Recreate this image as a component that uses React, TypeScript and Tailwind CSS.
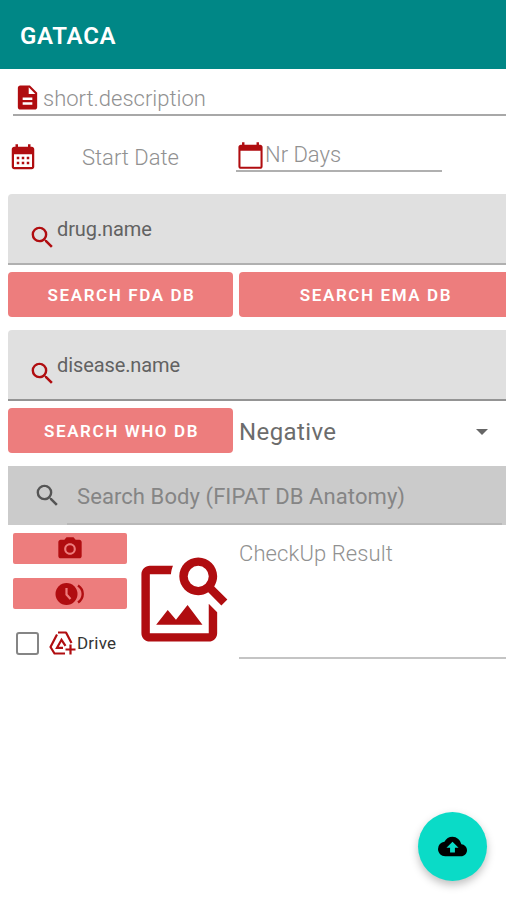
import type { ReactNode } from "react";
import { MdBackup, MdCameraAlt, MdDescription, MdImageSearch, MdSearch } from "react-icons/md";
import clsx from "clsx";

interface SearchFieldProps {
  label: string;
  className?: string;
}

function SearchField({ label, className }: SearchFieldProps) {
  return (
    <div className={clsx("ml-2 flex h-[71px] rounded-tl border-b-2 bg-[#e0e0e0] pl-5", className)}>
      <MdSearch className="mt-[29px] size-[29px] shrink-0 text-[#b00d10]" />
      <span className="mt-[23px] text-[20px] leading-6 tracking-[-0.1px] text-[#626262]">{label}</span>
    </div>
  );
}

function DbButton({ children, className }: { children: ReactNode; className?: string }) {
  return (
    <button
      className={clsx(
        "flex h-[45px] shrink-0 items-center justify-center rounded bg-[#ed7d7d] pt-[2px] pl-[2px] text-[17px] font-semibold tracking-[1.6px] text-white",
        className
      )}
    >
      {children}
    </button>
  );
}

function CalendarMonthIcon() {
  return (
    <svg viewBox="0 0 24 24" className="size-[30px] shrink-0" fill="#b00d10">
      <path
        fillRule="evenodd"
        d="M19 3h-1V1h-2v2H8V1H6v2H5c-1.1 0-2 .9-2 2v14c0 1.1.9 2 2 2h14c1.1 0 2-.9 2-2V5c0-1.1-.9-2-2-2zm.2 16.200H4.800V9h14.400z"
      />
      <path d="M7 11h2v2H7zM11 11h2v2h-2zM15 11h2v2h-2zM7 15h2v2H7zM11 15h2v2h-2zM15 15h2v2h-2z" />
    </svg>
  );
}

function CalendarIcon() {
  return (
    <svg viewBox="0 0 24 24" className="size-[29px] shrink-0" fill="#b00d10">
      <path
        fillRule="evenodd"
        d="M20 3h-1V1h-2v2H7V1H5v2H4c-1.100 0-2 .9-2 2v16c0 1.100.9 2 2 2h16c1.100 0 2-.9 2-2V5c0-1.100-.9-2-2-2zm.3 18.400H3.700V8h16.600z"
      />
    </svg>
  );
}

function ClockIcon() {
  return (
    <svg viewBox="0 0 30 24" className="h-6 w-[30px]" fill="none">
      <circle cx="11.500" cy="12" r="11" fill="#b00d10" />
      <path d="M11.500 6v6.500l4 4.500" stroke="#ed7d7d" strokeWidth="2.200" />
      <path d="M23 3.500c6.300 4.200 6.300 12.800 0 17" stroke="#b00d10" strokeWidth="2.400" />
    </svg>
  );
}

function DriveIcon() {
  return (
    <svg viewBox="0 0 27 25" className="h-[25px] w-[27px]" fill="none" stroke="#b00d10" strokeWidth="2.200">
      <path d="M8 3.500L1.500 16 5.500 22.500H16M9 1.500h8L22.500 12" strokeLinejoin="round" />
      <path d="M14 16.800H8l4.500-8 4 6" />
      <path d="M21.500 13.500v10M16.500 18.500h10" />
    </svg>
  );
}

export default function App() {
  return (
    <div className="relative h-[900px] w-[506px] overflow-hidden bg-white font-['Roboto',sans-serif]">
      <header className="flex h-[69px] items-center bg-[#008786] pt-[3px] pl-5">
        <h1 className="text-[24px] font-semibold tracking-[0.7px] text-white">GATACA</h1>
      </header>

      <div className="ml-[13px] flex h-[47px] border-b-2 border-[#a8a8a8]">
        <MdDescription className="mt-[14px] size-[29px] shrink-0 text-[#b00d10]" />
        <span className="mt-[16px] ml-[1px] text-[22px] leading-7 font-[350] text-[#919191]">short.description</span>
      </div>

      <div className="flex h-[78px] pl-2">
        <div className="flex w-[228px] pt-[27px]">
          <CalendarMonthIcon />
          <span className="mt-[1px] ml-[44px] text-[22px] leading-7 font-[350] text-[#919191]">Start Date</span>
        </div>
        <div className="flex h-[56px] w-[206px] border-b-2 border-[#b0b0b0] pt-[25px]">
          <CalendarIcon />
          <span className="text-[22px] leading-7 font-[350] text-[#919191]">Nr Days</span>
        </div>
      </div>

      <SearchField label="drug.name" className="border-[#b0b0b0]" />
      <div className="mt-[7px] ml-2 flex gap-[6px]">
        <DbButton className="w-[225px]">SEARCH FDA DB</DbButton>
        <DbButton className="w-[272px]">SEARCH EMA DB</DbButton>
      </div>

      <SearchField label="disease.name" className="mt-[13px] border-[#949494]" />
      <div className="mt-[7px] ml-2 flex items-center">
        <DbButton className="w-[225px]">SEARCH WHO DB</DbButton>
        <div className="flex flex-1 items-center justify-between pt-[2px] pr-[18px] pl-[6px]">
          <span className="text-[24px] tracking-[0.400px] text-[#6c6c6c]">Negative</span>
          <svg viewBox="0 0 12 6" className="h-[6px] w-3" fill="#666">
            <path d="M0 0h12L6 6z" />
          </svg>
        </div>
      </div>

      <div className="mt-[13px] ml-2 flex h-[59px] bg-[#cbcbcb]">
        <MdSearch className="mt-[15px] ml-[25px] size-[29px] shrink-0 text-[#555]" />
        <div className="mr-[4px] ml-[5px] flex flex-1 items-center border-b-2 border-[#b8b8b8] pt-[3px] pl-[10px]">
          <span className="text-[22px] tracking-[0.080px] text-[#858585]">Search Body (FIPAT DB Anatomy)</span>
        </div>
      </div>

      <div className="flex pl-[13px]">
        <div className="w-[114px] pt-2">
          <button className="flex h-[31px] w-full items-center justify-center rounded-xs bg-[#ed7d7d]">
            <MdCameraAlt className="size-[28px] text-[#b00d10]" />
          </button>
          <button className="mt-[14px] flex h-[31px] w-full items-center justify-center rounded-xs bg-[#ed7d7d]">
            <ClockIcon />
          </button>
          <label className="mt-[22px] flex h-6 items-center pl-[3px]">
            <span className="size-[23px] rounded-[3px] border-2 border-[#858585]" />
            <span className="ml-[10px]">
              <DriveIcon />
            </span>
            <span className="ml-[1px] pt-[1px] text-[17px] tracking-[0.200px] text-[#333]">Drive</span>
          </label>
        </div>
        <MdImageSearch className="mt-6 ml-[6px] size-[101px] shrink-0 text-[#b00d10]" />
        <div className="ml-[5px] h-[134px] flex-1 border-b-2 border-[#c4c4c4] pt-[15px]">
          <span className="text-[22px] leading-7 font-[350] tracking-[0.100px] text-[#919191]">CheckUp Result</span>
        </div>
      </div>

      <button className="absolute top-[812px] left-[418px] flex size-[69px] items-center justify-center rounded-full bg-[#0adbc7] shadow-[0_4px_8px_rgba(0,0,0,0.25)]">
        <MdBackup className="size-[29px] text-black" />
      </button>
    </div>
  );
}
